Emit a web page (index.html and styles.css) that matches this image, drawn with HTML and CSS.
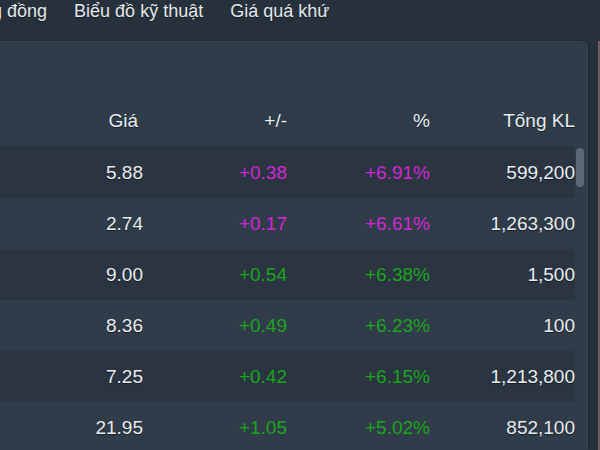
FILE: index.html
```html
<!DOCTYPE html>
<html lang="vi">
<head>
<meta charset="utf-8">
<title>Bảng giá</title>
<link rel="stylesheet" href="styles.css">
</head>
<body>
<nav class="tabs">
  <span class="tab first">Cộng đồng</span>
  <span class="tab">Biểu đồ kỹ thuật</span>
  <span class="tab">Giá quá khứ</span>
</nav>
<div class="stage">
  <section class="panel">
    <div class="panel-top"></div>
    <div class="grid head">
      <div class="cell c-gia">Giá</div>
      <div class="cell">+/-</div>
      <div class="cell">%</div>
      <div class="cell">Tổng KL</div>
    </div>
    <div class="grid row odd">
      <div class="cell">5.88</div>
      <div class="cell ceil">+0.38</div>
      <div class="cell ceil">+6.91%</div>
      <div class="cell">599,200</div>
    </div>
    <div class="grid row even">
      <div class="cell">2.74</div>
      <div class="cell ceil">+0.17</div>
      <div class="cell ceil">+6.61%</div>
      <div class="cell">1,263,300</div>
    </div>
    <div class="grid row odd">
      <div class="cell">9.00</div>
      <div class="cell up">+0.54</div>
      <div class="cell up">+6.38%</div>
      <div class="cell">1,500</div>
    </div>
    <div class="grid row even">
      <div class="cell">8.36</div>
      <div class="cell up">+0.49</div>
      <div class="cell up">+6.23%</div>
      <div class="cell">100</div>
    </div>
    <div class="grid row odd">
      <div class="cell">7.25</div>
      <div class="cell up">+0.42</div>
      <div class="cell up">+6.15%</div>
      <div class="cell">1,213,800</div>
    </div>
    <div class="grid row even">
      <div class="cell">21.95</div>
      <div class="cell up">+1.05</div>
      <div class="cell up">+5.02%</div>
      <div class="cell">852,100</div>
    </div>
    <div class="scrollbar"></div>
  </section>
  <div class="gutter"></div>
  <div class="edge"></div>
</div>
</body>
</html>
```
FILE: styles.css
```css
html, body {
  margin: 0;
  padding: 0;
  height: 100%;
  overflow: hidden;
}
body {
  background: #27313b;
  font-family: "Liberation Sans", Arial, sans-serif;
  color: #e8edf1;
}
.tabs {
  height: 41px;
  display: flex;
  gap: 27px;
  white-space: nowrap;
  font-size: 18px;
  line-height: 22px;
  color: #e3e8ec;
  text-shadow: 0 1px 1px rgba(0,0,0,0.45);
}
.tab.first {
  margin-left: -41px;
}
.stage {
  display: flex;
  height: 409px;
}
.panel {
  position: relative;
  flex: 1;
  margin-left: -10px;
  background: #2f3c49;
  border-top: 1px solid #35424f;
  border-right: 1px solid #35424f;
  border-top-right-radius: 5px;
  box-shadow: 1px -1px 2px rgba(0,0,0,0.25);
  overflow: hidden;
  padding-right: 12px;
}
.panel-top {
  height: 54px;
}
.grid {
  display: grid;
  grid-template-columns: 153px 144px 143px 145px;
  align-items: center;
  height: 51px;
  font-size: 19px;
  text-shadow: 0 1px 1px rgba(0,0,0,0.5);
}
.head {
  border-bottom: 1px solid #2c3844;
  height: 50px;
}
.cell {
  text-align: right;
}
.c-gia {
  padding-right: 5px;
}
.odd {
  background: #2a3541;
}
.even {
  background: #303c49;
}
.ceil {
  color: #d026d6;
  text-shadow: none;
}
.up {
  color: #1aa51c;
  text-shadow: none;
}
.scrollbar {
  position: absolute;
  right: 3px;
  top: 106px;
  width: 8px;
  height: 39px;
  border-radius: 4px;
  background: #5b6976;
}
.gutter {
  width: 10px;
  background: #27313b;
}
.edge {
  width: 2px;
  background: #6e5c5e;
}
```
